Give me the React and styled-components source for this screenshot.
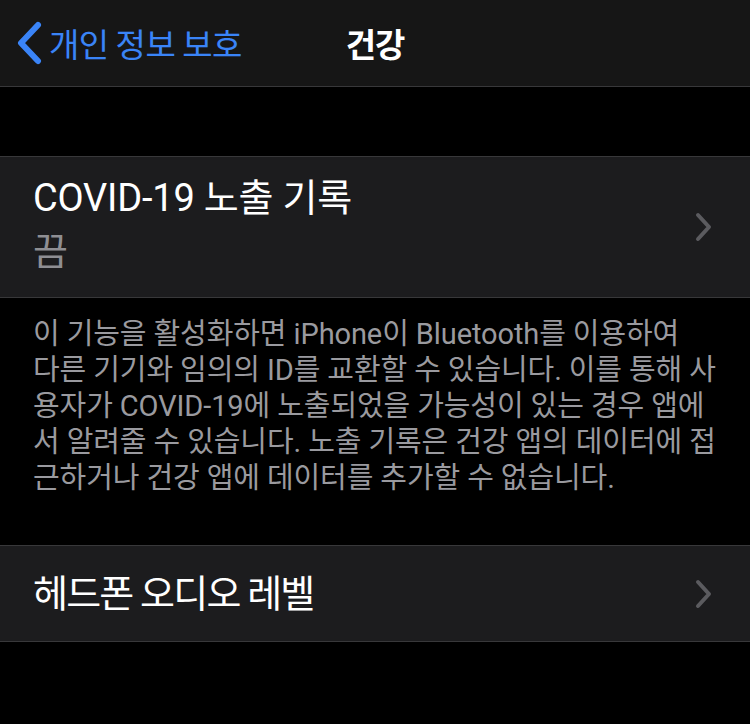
import styled, { createGlobalStyle } from 'styled-components';

const GlobalStyle = createGlobalStyle`
  html, body {
    margin: 0;
    padding: 0;
    background: #000;
  }
  body {
    font-family: Roboto, "Noto Sans CJK KR", sans-serif;
    -webkit-font-smoothing: antialiased;
  }
`;

const footerLines = [
  '이 기능을 활성화하면 iPhone이 Bluetooth를 이용하여',
  '다른 기기와 임의의 ID를 교환할 수 있습니다. 이를 통해 사',
  '용자가 COVID-19에 노출되었을 가능성이 있는 경우 앱에',
  '서 알려줄 수 있습니다. 노출 기록은 건강 앱의 데이터에 접',
  '근하거나 건강 앱에 데이터를 추가할 수 없습니다.',
];

const BackChevron = () => (
  <svg width="28" height="44" viewBox="0 0 28 44">
    <path
      d="M23 4 L6 22 L23 40"
      fill="none"
      stroke="#3a84f7"
      strokeWidth="6"
      strokeLinecap="round"
      strokeLinejoin="round"
    />
  </svg>
);

const Disclosure = () => (
  <svg width="18" height="30" viewBox="0 0 18 30">
    <path
      d="M3 3 L14 15 L3 27"
      fill="none"
      stroke="#5b5b5f"
      strokeWidth="4"
      strokeLinecap="round"
      strokeLinejoin="round"
    />
  </svg>
);

const App = () => {
  return (
    <Page>
      <GlobalStyle />
      <NavBar>
        <BackButton>
          <BackChevron />
          <BackLabel>개인 정보 보호</BackLabel>
        </BackButton>
        <NavTitle>건강</NavTitle>
        <span />
      </NavBar>

      <Group $top={69}>
        <Cell $height={140}>
          <CellText>
            <CellTitle>COVID-19 노출 기록</CellTitle>
            <CellValue>끔</CellValue>
          </CellText>
          <Disclosure />
        </Cell>
      </Group>

      <Footer>
        {footerLines.map((line) => (
          <FooterLine key={line}>{line}</FooterLine>
        ))}
      </Footer>

      <Group>
        <Cell $height={95}>
          <CellTitle $spacing={-1.8}>헤드폰 오디오 레벨</CellTitle>
          <Disclosure />
        </Cell>
      </Group>
    </Page>
  );
};

const Page = styled.div`
  width: 750px;
  min-height: 724px;
  background: #000;
  overflow: hidden;
`;

const NavBar = styled.header`
  height: 86px;
  background: #161616;
  border-bottom: 1px solid #38383a;
  display: grid;
  grid-template-columns: 1fr auto 1fr;
  align-items: center;
`;

const BackButton = styled.div`
  display: flex;
  align-items: center;
  gap: 6px;
  padding-left: 15px;
  color: #3a84f7;
`;

const BackLabel = styled.span`
  font-family: "Noto Sans CJK KR", sans-serif;
  font-size: 33px;
  letter-spacing: -0.5px;
  line-height: 40px;
`;

const NavTitle = styled.h1`
  margin: 0;
  font-family: "Noto Sans CJK KR", sans-serif;
  font-size: 33px;
  font-weight: 700;
  color: #fff;
  letter-spacing: -1px;
`;

const Group = styled.section`
  margin-top: ${(p) => p.$top || 0}px;
  background: #1c1c1e;
  border-top: 1px solid #38383a;
  border-bottom: 1px solid #38383a;
`;

const Cell = styled.div`
  height: ${(p) => p.$height}px;
  box-sizing: border-box;
  padding: 0 37px 0 33px;
  display: flex;
  align-items: center;
  justify-content: space-between;
`;

const CellText = styled.div`
  display: flex;
  flex-direction: column;
  gap: 4px;
  padding-bottom: 4px;
`;

const CellTitle = styled.div`
  font-size: 38px;
  line-height: 50px;
  color: #fff;
  letter-spacing: ${(p) => p.$spacing ?? -0.2}px;
`;

const CellValue = styled.div`
  font-size: 38px;
  line-height: 50px;
  color: #8e8e93;
`;

const Footer = styled.div`
  padding: 18px 33px 0;
  height: 247px;
  box-sizing: border-box;
`;

const FooterLine = styled.div`
  font-size: 29px;
  line-height: 36px;
  color: #9a9a9f;
  white-space: nowrap;
  letter-spacing: -0.1px;
`;

export default App;
